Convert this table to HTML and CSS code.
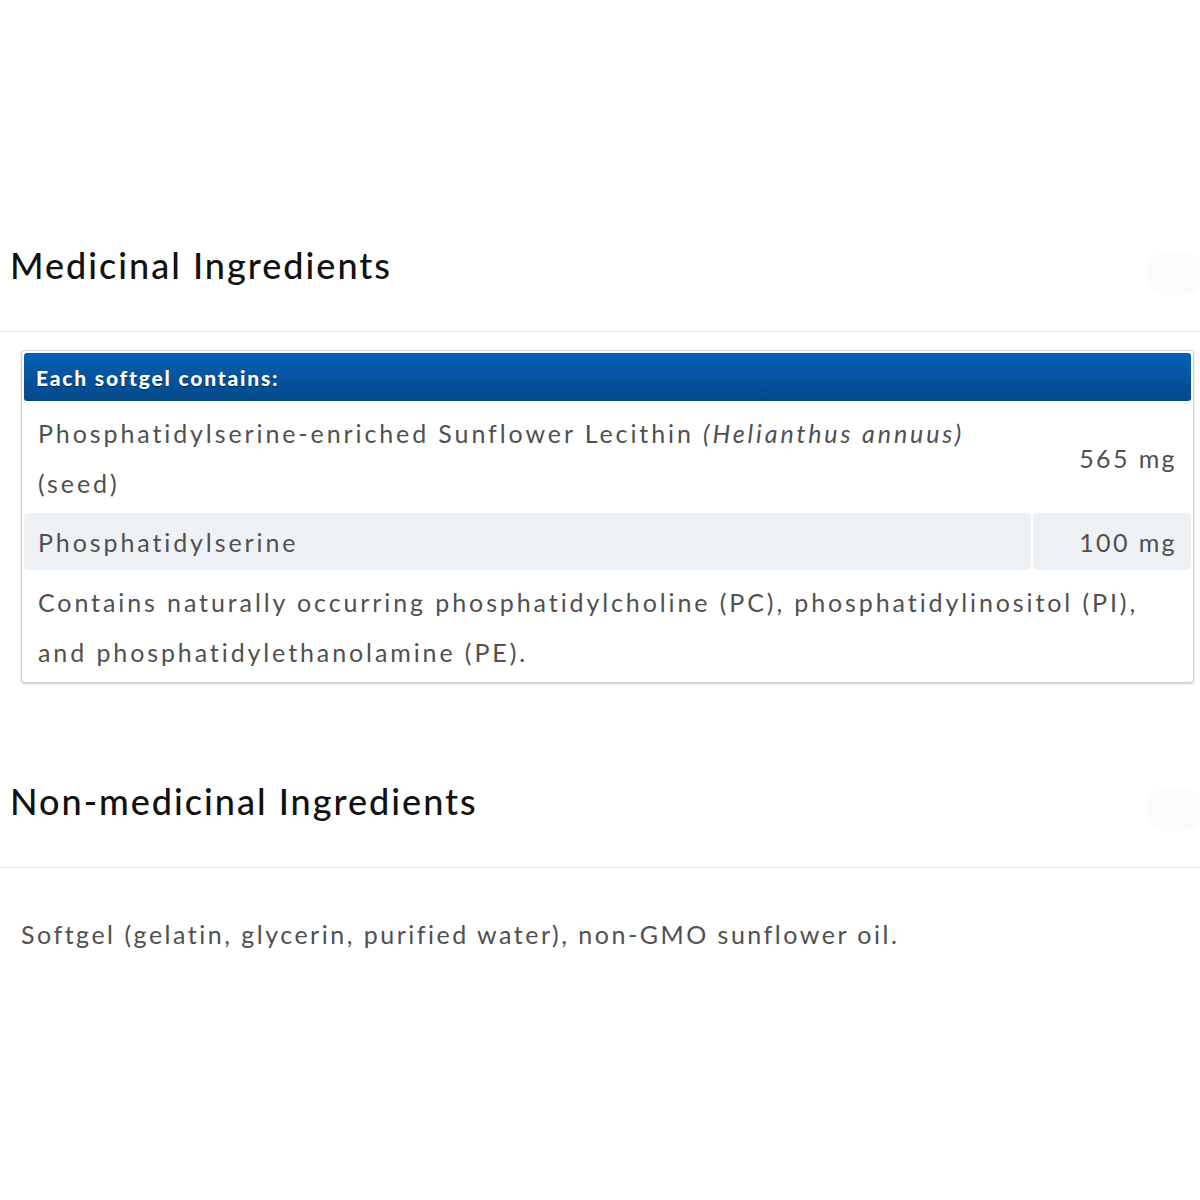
FILE: index.html
```html
<!DOCTYPE html>
<html lang="en">
<head>
<meta charset="utf-8">
<title>Ingredients</title>
<link rel="stylesheet" href="styles.css">
</head>
<body>
<div class="page">
  <section class="section">
    <div class="section-head">
      <h2 class="section-title">Medicinal Ingredients</h2>
      <span class="toggle"></span>
    </div>
    <div class="section-body">
      <div class="card">
        <table class="ing-table">
          <thead>
            <tr><th colspan="2" class="ing-head">Each softgel contains:</th></tr>
          </thead>
          <tbody>
            <tr>
              <td class="ing-name">Phosphatidylserine-enriched Sunflower Lecithin <em>(Helianthus annuus)</em> (seed)</td>
              <td class="ing-amt">565 mg</td>
            </tr>
            <tr class="alt">
              <td class="ing-name">Phosphatidylserine</td>
              <td class="ing-amt">100 mg</td>
            </tr>
            <tr>
              <td colspan="2" class="ing-name">Contains naturally occurring phosphatidylcholine (PC), phosphatidylinositol (PI), and phosphatidylethanolamine (PE).</td>
            </tr>
          </tbody>
        </table>
      </div>
    </div>
  </section>
  <section class="section second">
    <div class="section-head">
      <h2 class="section-title">Non-medicinal Ingredients</h2>
      <span class="toggle"></span>
    </div>
    <div class="section-body">
      <p class="plain">Softgel (gelatin, glycerin, purified water), non-GMO sunflower oil.</p>
    </div>
  </section>
</div>
</body>
</html>
```

FILE: styles.css
```css
html, body {
  margin: 0;
  padding: 0;
  background: #ffffff;
}
body {
  font-family: "Lato", "Open Sans", sans-serif;
  color: #4d4d4d;
}
.page {
  padding-top: 199px;
}
.section-head {
  display: flex;
  align-items: center;
  justify-content: space-between;
  height: 132px;
  border-bottom: 1px solid #e6e6e6;
  padding-left: 10px;
}
.section-title {
  margin: 0;
  font-size: 36px;
  font-weight: 500;
  letter-spacing: 2px;
  color: #111111;
}
.toggle {
  width: 60px;
  height: 42px;
  margin-top: 18px;
  margin-right: -5px;
  border-radius: 21px;
  background: #fbfbfb;
}
.section-body {
  padding: 18px 6px 52px 21px;
}
.card {
  border: 1px solid #d3d3d3;
  border-radius: 4px;
  box-shadow: 0 1px 2px rgba(0, 0, 0, 0.2);
  background: #fff;
}
.ing-table {
  width: 100%;
  border-collapse: separate;
  border-spacing: 2px;
}
.ing-head {
  text-align: left;
  height: 48px;
  padding: 0 12px;
  font-size: 21px;
  font-weight: 900;
  letter-spacing: 1.8px;
  color: #ffffff;
  text-shadow: 0 1px 1px #0a2850;
  background: linear-gradient(#0660b6, #04498a);
  border-radius: 3px;
}
.ing-name, .ing-amt {
  font-size: 25px;
  line-height: 50px;
  letter-spacing: 2.9px;
  color: #505050;
  padding: 5px 14px 3px;
  border-radius: 4px;
  vertical-align: middle;
}
.ing-name em {
  font-style: italic;
}
.ing-amt {
  text-align: right;
  white-space: nowrap;
  width: 130px;
  letter-spacing: 2.4px;
}
.alt td {
  background: #eff2f5;
  padding-top: 4px;
  padding-bottom: 3px;
}
.plain {
  margin: 0;
  padding-top: 33px;
  font-size: 25px;
  letter-spacing: 2.5px;
  color: #505050;
}
```
